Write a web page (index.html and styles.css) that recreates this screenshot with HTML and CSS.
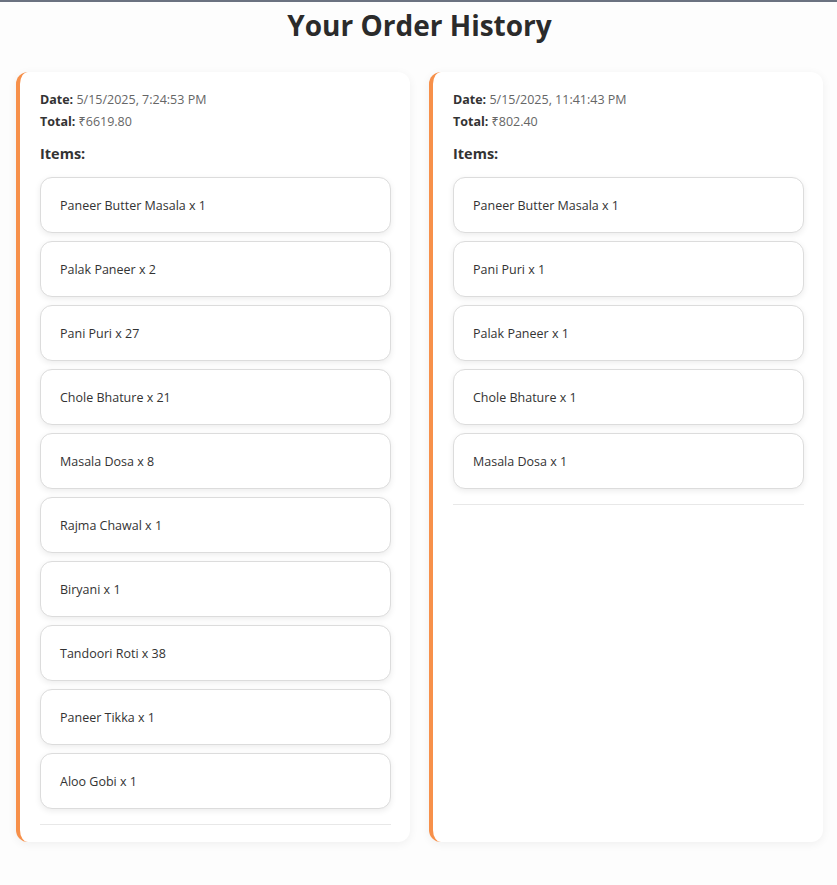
FILE: index.html
```html
<!DOCTYPE html>
<html lang="en">
<head>
<meta charset="utf-8">
<title>Your Order History</title>
<link rel="stylesheet" href="styles.css">
</head>
<body>
<div class="page">
  <h1 class="title">Your Order History</h1>
  <div class="orders">
    <div class="order-card">
      <p class="meta"><strong>Date:</strong> 5/15/2025, 7:24:53 PM</p>
      <p class="meta"><strong>Total:</strong> ₹6619.80</p>
      <h3 class="items-heading">Items:</h3>
      <ul class="items">
        <li class="item">Paneer Butter Masala x 1</li>
        <li class="item">Palak Paneer x 2</li>
        <li class="item">Pani Puri x 27</li>
        <li class="item">Chole Bhature x 21</li>
        <li class="item">Masala Dosa x 8</li>
        <li class="item">Rajma Chawal x 1</li>
        <li class="item">Biryani x 1</li>
        <li class="item">Tandoori Roti x 38</li>
        <li class="item">Paneer Tikka x 1</li>
        <li class="item">Aloo Gobi x 1</li>
      </ul>
      <hr class="divider">
    </div>
    <div class="order-card">
      <p class="meta"><strong>Date:</strong> 5/15/2025, 11:41:43 PM</p>
      <p class="meta"><strong>Total:</strong> ₹802.40</p>
      <h3 class="items-heading">Items:</h3>
      <ul class="items">
        <li class="item">Paneer Butter Masala x 1</li>
        <li class="item">Pani Puri x 1</li>
        <li class="item">Palak Paneer x 1</li>
        <li class="item">Chole Bhature x 1</li>
        <li class="item">Masala Dosa x 1</li>
      </ul>
      <hr class="divider">
    </div>
  </div>
</div>
</body>
</html>
```
FILE: styles.css
```css
html, body {
  margin: 0;
  padding: 0;
}
body {
  background: #fdfdfd;
  border-top: 2px solid #6b7280;
  font-family: "Open Sans", "Noto Sans", sans-serif;
  color: #333;
  min-height: 883px;
  box-sizing: border-box;
}
.page {
  padding: 0 14px 40px 16px;
}
.title {
  margin: 0;
  padding-top: 4px;
  height: 66px;
  text-align: center;
  font-size: 28px;
  font-weight: 700;
  color: #2b2b2b;
  line-height: 38px;
}
.orders {
  display: grid;
  grid-template-columns: 394px 394px;
  column-gap: 19px;
}
.order-card {
  background: #fff;
  border-left: 4px solid #f7904a;
  border-radius: 12px;
  padding: 17px 19px 17px 20px;
  box-shadow: 0 2px 10px rgba(0,0,0,0.06);
}
.meta {
  margin: 0;
  font-size: 12.5px;
  line-height: 22px;
  color: #666;
}
.meta strong {
  color: #333;
  font-weight: 700;
}
.items-heading {
  margin: 11px 0 13px;
  font-size: 14.5px;
  line-height: 20px;
  font-weight: 700;
  color: #333;
}
.items {
  list-style: none;
  margin: 0;
  padding: 0;
  display: flex;
  flex-direction: column;
  gap: 8px;
}
.item {
  background: #fff;
  border: 1px solid #dcdcdc;
  border-radius: 12px;
  padding: 0 19px;
  height: 54px;
  display: flex;
  align-items: center;
  font-size: 12.5px;
  color: #333;
  box-shadow: 0 2px 6px rgba(0,0,0,0.08);
}
.divider {
  margin: 15px 0 0;
  border: 0;
  border-top: 1px solid #e8e8e8;
}
```
